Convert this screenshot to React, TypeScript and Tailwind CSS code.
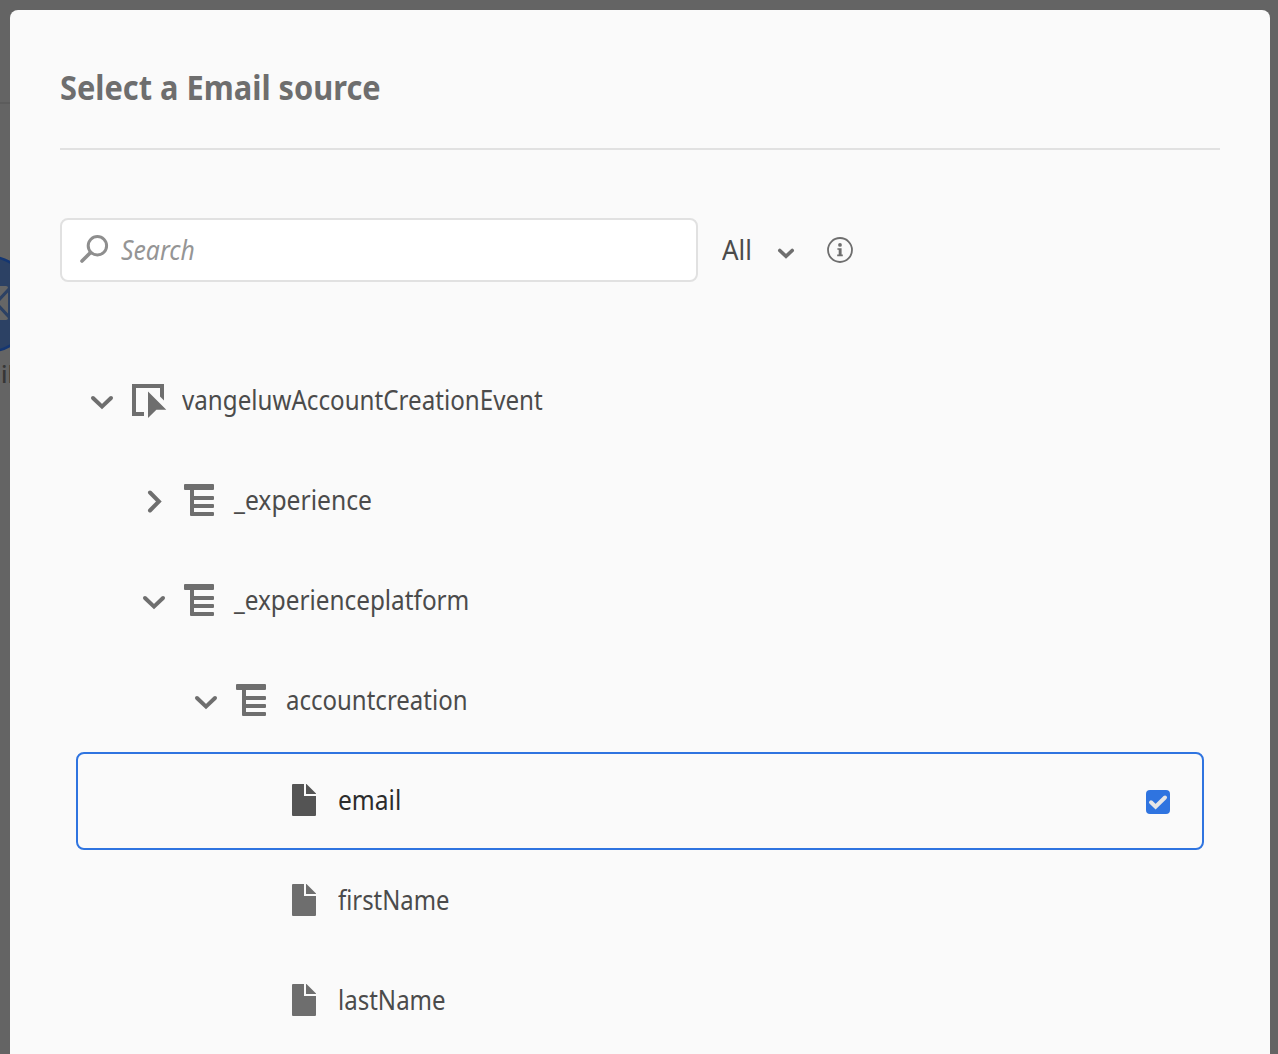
import React from "react";

type IconKind = "event" | "object" | "file";

function ChevronDown() {
  return (
    <svg width="24" height="24" viewBox="0 0 24 24" className="block shrink-0" fill="none" stroke="#6e6e6e" strokeWidth="4" strokeLinecap="round" strokeLinejoin="miter">
      <path d="M3 9 L12 17.6 L21 9" />
    </svg>
  );
}

function ChevronRight() {
  return (
    <svg width="24" height="24" viewBox="0 0 24 24" className="block shrink-0" fill="none" stroke="#6e6e6e" strokeWidth="4" strokeLinecap="round" strokeLinejoin="miter">
      <path d="M8 3.5 L16.9 12.5 L8 21.5" />
    </svg>
  );
}

function NodeIcon({ kind, dark }: { kind: IconKind; dark?: boolean }) {
  const fill = dark ? "#545454" : "#6e6e6e";
  return (
    <svg width="36" height="36" viewBox="0 0 36 36" className="block shrink-0" fill={fill}>
      {kind === "event" && (
        <>
          <path d="M0 1 H32 V17.5 L28 13.5 V5 H4 V29 H12 V33 H0 Z" />
          <path d="M16 8.5 L34.3 26.8 H24.4 L16 35 Z" />
        </>
      )}
      {kind === "object" && (
        <path d="M1 1 H29 A1 1 0 0 1 30 2 V6 A1 1 0 0 1 29 7 H10 V13 H29 A1 1 0 0 1 30 14 V16 A1 1 0 0 1 29 17 H10 V21 H29 A1 1 0 0 1 30 22 V24 A1 1 0 0 1 29 25 H10 V29 H29 A1 1 0 0 1 30 30 V32 A1 1 0 0 1 29 33 H7 A1 1 0 0 1 6 32 V7 H1 A1 1 0 0 1 0 6 V2 A1 1 0 0 1 1 1 Z" />
      )}
      {kind === "file" && (
        <>
          <path d="M5 1 H16 V13 H28 V32 A1 1 0 0 1 27 33 H5 A1 1 0 0 1 4 32 V2 A1 1 0 0 1 5 1 Z" />
          <path d="M18 1 H18.5 L28 10.5 V11 H18 Z" />
        </>
      )}
    </svg>
  );
}

interface RowProps {
  label: string;
  kind: IconKind;
  indent: string;
  stretch: string;
  open?: boolean;
  selected?: boolean;
}

function TreeRow({ label, kind, indent, stretch, open, selected }: RowProps) {
  return (
    <div className={`flex h-[98px] items-center rounded-lg border-2 pr-8 ${indent} ${selected ? "border-[#2f74e0]" : "border-transparent"}`}>
      <div className="flex w-[42px] shrink-0">
        {open === undefined ? null : open ? <ChevronDown /> : <ChevronRight />}
      </div>
      <NodeIcon kind={kind} dark={selected} />
      <span className={`mb-[2px] ml-[14px] inline-block origin-left whitespace-nowrap text-[27px] leading-[36px] ${stretch} ${selected ? "text-[#2c2c2c]" : "text-[#4b4b4b]"}`}>
        {label}
      </span>
      {selected && (
        <svg width="24" height="24" viewBox="0 0 24 24" className="mt-[2px] ml-auto block">
          <rect width="24" height="24" rx="4" fill="#2f74e0" />
          <path d="M5 12.3 L9.6 16.7 L19 7.5" fill="none" stroke="#e6e6e6" strokeWidth="4" strokeLinecap="round" />
        </svg>
      )}
    </div>
  );
}

const rows: RowProps[] = [
  { label: "vangeluwAccountCreationEvent", kind: "event", indent: "pl-[12px]", stretch: "scale-x-[0.895]", open: true },
  { label: "_experience", kind: "object", indent: "pl-[64px]", stretch: "scale-x-[0.913]", open: false },
  { label: "_experienceplatform", kind: "object", indent: "pl-[64px]", stretch: "scale-x-[0.9]", open: true },
  { label: "accountcreation", kind: "object", indent: "pl-[116px]", stretch: "scale-x-[0.889]", open: true },
  { label: "email", kind: "file", indent: "pl-[168px]", stretch: "scale-x-[0.91]", selected: true },
  { label: "firstName", kind: "file", indent: "pl-[168px]", stretch: "scale-x-[0.883]" },
  { label: "lastName", kind: "file", indent: "pl-[168px]", stretch: "scale-x-[0.89]" },
];

export default function App() {
  return (
    <div className="relative h-[1054px] w-[1278px] overflow-hidden bg-[#646464] pt-[10px] pl-[10px] font-['Noto_Sans',sans-serif]">
      <div className="absolute top-[102px] left-0 h-[2px] w-[10px] bg-[#5c5c5c]" />
      <svg className="absolute top-[250px] left-0" width="10" height="110" viewBox="0 0 10 110">
        <circle cx="-14" cy="54" r="48" fill="#2c4164" stroke="#143672" strokeWidth="2.5" />
        <rect x="-30" y="36" width="38" height="34" rx="2" fill="#666666" />
        <path d="M9 39 L-4 53 L9 67" fill="none" stroke="#2c4164" strokeWidth="3" />
      </svg>
      <span className="absolute top-[359px] left-[1px] text-[24px] leading-[30px] font-medium text-[#363636]">il</span>

      <div className="relative h-[1044px] w-[1260px] rounded-t-lg bg-[#fafafa] px-[50px]">
        <header className="flex h-[140px] items-center border-b-2 border-[#e1e1e1] pt-[15px]">
          <h1 className="origin-left whitespace-nowrap text-[34px] leading-[46px] font-bold text-[#6e6e6e] scale-x-[0.905]">Select a Email source</h1>
        </header>

        <div className="mt-[68px] flex h-16 items-center">
          <div className="flex h-16 w-[638px] items-center rounded-lg border-2 border-[#e1e1e1] bg-white pl-[18px]">
            <svg width="30" height="30" viewBox="0 0 30 30" fill="none" stroke="#8e8e8e" className="mb-[2px] block shrink-0">
              <circle cx="17.4" cy="11.7" r="9.2" strokeWidth="3" />
              <path d="M10.5 18.6 L2 27" strokeWidth="3.6" strokeLinecap="round" />
            </svg>
            <span className="ml-[11px] origin-left text-[27px] leading-[36px] text-[#959595] italic scale-x-[0.916]">Search</span>
          </div>
          <span className="ml-6 w-[54px] origin-left text-[27px] leading-[36px] text-[#4b4b4b] scale-x-[0.96]">All</span>
          <svg width="20" height="20" viewBox="0 0 20 20" fill="none" stroke="#6e6e6e" strokeWidth="3.6" strokeLinecap="round" className="mt-[6px] block">
            <path d="M3.8 7.5 L10 13.3 L16.2 7.5" />
          </svg>
          <svg width="28" height="28" viewBox="0 0 28 28" className="ml-[30px] block" fill="#6e6e6e">
            <circle cx="14" cy="14" r="12" fill="none" stroke="#6e6e6e" strokeWidth="1.8" />
            <circle cx="14" cy="8.9" r="1.9" />
            <path d="M11.4 12.2 H15.6 V18.6 H16.8 V20.2 H11.2 V18.6 H12.7 V13.8 H11.4 Z" />
          </svg>
        </div>

        <div className="mx-4 mt-[70px] flex flex-col gap-[2px]">
          {rows.map((row) => (
            <TreeRow key={row.label} {...row} />
          ))}
        </div>
      </div>
    </div>
  );
}
